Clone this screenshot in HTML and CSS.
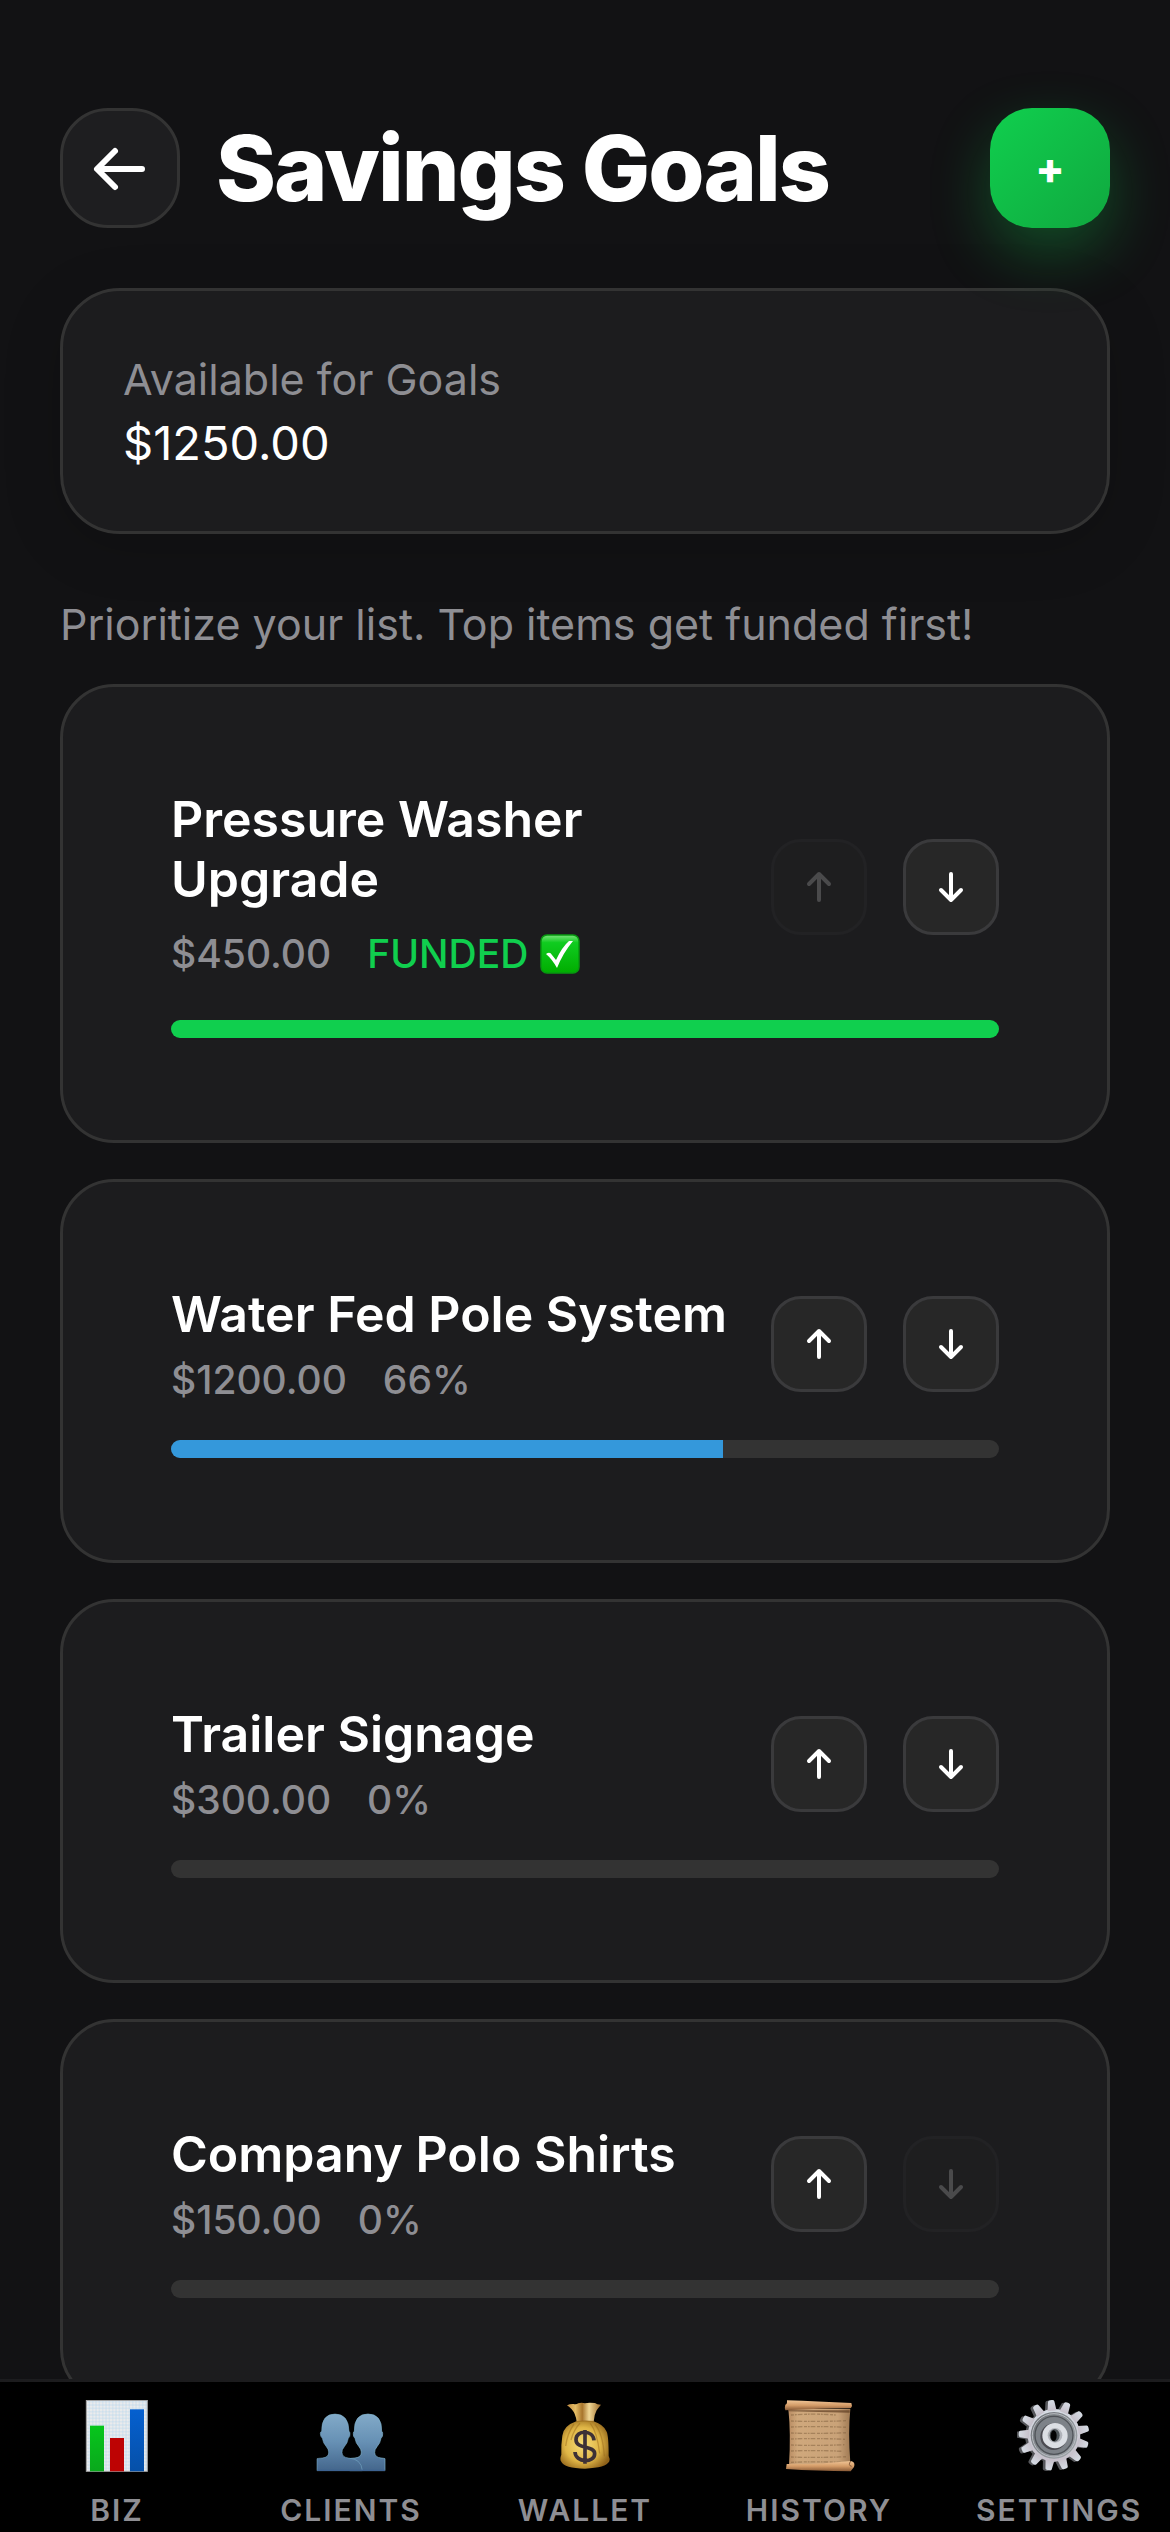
FILE: index.html
```html
<!DOCTYPE html>
<html lang="en">
<head>
<meta charset="utf-8">
<meta name="viewport" content="width=device-width, initial-scale=1">
<title>Savings Goals</title>
<link rel="stylesheet" href="styles.css">
</head>
<body>
<svg class="sprite" aria-hidden="true">
  <symbol id="arrow-up" viewBox="0 0 32 36"><path d="M16 31V5M6 15 16 5l10 10"/></symbol>
  <symbol id="arrow-down" viewBox="0 0 32 36"><path d="M16 5v26M6 21l10 10 10-10"/></symbol>
</svg>
<div class="app">
  <main class="screen">
    <header class="header">
      <button class="back" type="button" aria-label="Back">
        <svg class="back-icon" viewBox="0 0 60 60" aria-hidden="true"><path d="M52 31H8M25 13 7 31l18 18"/></svg>
      </button>
      <h1 class="title">Savings Goals</h1>
      <button class="add" type="button" aria-label="Add goal">+</button>
    </header>

    <section class="summary">
      <p class="summary-label">Available for Goals</p>
      <p class="summary-value">$1250.00</p>
    </section>

    <p class="hint">Prioritize your list. Top items get funded first!</p>

    <ul class="goals">
      <li class="goal">
        <div class="goal-row">
          <div class="goal-text">
            <h2 class="goal-name">Pressure Washer Upgrade</h2>
            <div class="goal-meta goal-meta-funded">
              <span>$450.00</span>
              <span class="funded">FUNDED
                <svg class="check" viewBox="0 0 40 40" role="img" aria-label="Done">
                  <defs><linearGradient id="ck" x2="0" y2="1"><stop offset="0" stop-color="#7be27b"/><stop offset=".2" stop-color="#10cc20"/><stop offset="1" stop-color="#00ad00"/></linearGradient></defs>
                  <rect x="1" y="1" width="38" height="38" rx="6" fill="url(#ck)" stroke="#079910" stroke-width="1.5"/>
                  <path d="M6 20q4-3 6 1l4 5Q22 13 29 7h4Q23 19 17 34 12 25 6 20z" fill="#fff"/>
                </svg>
              </span>
            </div>
          </div>
          <div class="moves">
            <button class="move" type="button" aria-label="Move up" disabled><svg class="move-icon"><use href="#arrow-up"/></svg></button>
            <button class="move" type="button" aria-label="Move down"><svg class="move-icon"><use href="#arrow-down"/></svg></button>
          </div>
        </div>
        <div class="track"><div class="fill fill-done" style="width:100%"></div></div>
      </li>
      <li class="goal">
        <div class="goal-row">
          <div class="goal-text">
            <h2 class="goal-name">Water Fed Pole System</h2>
            <div class="goal-meta"><span>$1200.00</span><span>66%</span></div>
          </div>
          <div class="moves">
            <button class="move" type="button" aria-label="Move up"><svg class="move-icon"><use href="#arrow-up"/></svg></button>
            <button class="move" type="button" aria-label="Move down"><svg class="move-icon"><use href="#arrow-down"/></svg></button>
          </div>
        </div>
        <div class="track"><div class="fill" style="width:66.67%"></div></div>
      </li>
      <li class="goal">
        <div class="goal-row">
          <div class="goal-text">
            <h2 class="goal-name">Trailer Signage</h2>
            <div class="goal-meta"><span>$300.00</span><span>0%</span></div>
          </div>
          <div class="moves">
            <button class="move" type="button" aria-label="Move up"><svg class="move-icon"><use href="#arrow-up"/></svg></button>
            <button class="move" type="button" aria-label="Move down"><svg class="move-icon"><use href="#arrow-down"/></svg></button>
          </div>
        </div>
        <div class="track"><div class="fill" style="width:0%"></div></div>
      </li>
      <li class="goal">
        <div class="goal-row">
          <div class="goal-text">
            <h2 class="goal-name">Company Polo Shirts</h2>
            <div class="goal-meta"><span>$150.00</span><span>0%</span></div>
          </div>
          <div class="moves">
            <button class="move" type="button" aria-label="Move up"><svg class="move-icon"><use href="#arrow-up"/></svg></button>
            <button class="move" type="button" aria-label="Move down" disabled><svg class="move-icon"><use href="#arrow-down"/></svg></button>
          </div>
        </div>
        <div class="track"><div class="fill" style="width:0%"></div></div>
      </li>
    </ul>
  </main>

  <nav class="tabs" aria-label="Main">
    <a class="tab" href="#biz">
      <svg class="tab-icon" viewBox="0 0 216 216" aria-hidden="true">
        <defs>
          <pattern id="grid" width="10" height="10" patternUnits="userSpaceOnUse"><rect width="10" height="10" fill="#ececec"/><path d="M0 5h10M5 0v10" stroke="#bcd8ec" stroke-width="2"/></pattern>
          <linearGradient id="bg" x2="0" y2="1"><stop stop-color="#06c61c"/><stop offset="1" stop-color="#0aa81c"/></linearGradient>
          <linearGradient id="bb" x2="0" y2="1"><stop stop-color="#0560d0"/><stop offset="1" stop-color="#0650a8"/></linearGradient>
        </defs>
        <rect x="16" y="1" width="183" height="213" fill="url(#grid)" stroke="#a5a5a5" stroke-width="3"/>
        <rect x="27" y="77" width="42" height="137" fill="url(#bg)"/>
        <rect x="87" y="114" width="42" height="100" fill="#bd0303"/>
        <rect x="147" y="28" width="42" height="186" fill="url(#bb)"/>
      </svg>
      <span class="tab-label">BIZ</span>
    </a>
    <a class="tab" href="#clients">
      <svg class="tab-icon" viewBox="0 0 216 216" aria-hidden="true">
        <defs><linearGradient id="pp" gradientUnits="userSpaceOnUse" x1="0" y1="42" x2="0" y2="212"><stop stop-color="#82aac8"/><stop offset=".5" stop-color="#6690b4"/><stop offset="1" stop-color="#44668c"/></linearGradient></defs>
        <g fill="url(#pp)" stroke="#7fb2cc" stroke-width="2">
          <path d="M104 212v-36q2-1 16-2 20-2 19-18 0-8-7-16-10-11-12-25-6-5-5-14 0-6 3-7-1-52 41-52t41 52q3 1 3 7 1 9-5 14-2 14-12 25-8 9-7 18 1 14 19 16 10 1 12 2v36z"/>
          <path d="M6 212v-36q2-1 16-2 20-2 19-18 0-8-7-16-10-11-12-25-6-5-6-14 0-6 4-7-1-52 40-52t42 52q3 1 3 7 1 9-5 14-2 14-12 25-8 9-7 18 1 14 19 16 39 2 42 38z" stroke-width="1.5"/>
        </g>
        <path d="M7 211h203" stroke="#3d6290" stroke-width="4"/>
      </svg>
      <span class="tab-label">CLIENTS</span>
    </a>
    <a class="tab" href="#wallet">
      <svg class="tab-icon" viewBox="0 0 216 216" aria-hidden="true">
        <defs>
          <radialGradient id="bag" cx=".45" cy=".5" r=".6"><stop stop-color="#f7dd78"/><stop offset=".6" stop-color="#dfb545"/><stop offset="1" stop-color="#8e6119"/></radialGradient>
          <linearGradient id="neck"><stop stop-color="#c08c42"/><stop offset=".25" stop-color="#e4bd66"/><stop offset=".45" stop-color="#a8752c"/><stop offset=".65" stop-color="#f0d795"/><stop offset="1" stop-color="#9c6a28"/></linearGradient>
        </defs>
        <path d="M54 16q10-5 20-4 8 2 14-2 10-3 20 0 8-3 30-1 5 5 18 5-7 8-13 17-8 14-9 34H83q-3-24-15-37-7-7-14-12z" fill="url(#neck)"/>
        <path d="M82 64q26-4 52 0 30 10 39 31 6 13 6 73 5 10 2 16-10 20-73 22-62 0-72-22-4-7 1-20-1-32 3-57 4-30 42-43z" fill="url(#bag)"/>
        <path d="M82 65q26-4 52 0M75 72Q55 100 50 138M93 70q-18 18-27 50M124 70q20 25 28 90M138 73q24 28 28 96" fill="none" stroke="#966619" stroke-opacity=".45" stroke-width="4"/>
        <path d="M135 121c-2-32-54-32-54-2 0 30 56 16 56 42 0 29-58 28-59-5M108 90v101" fill="none" stroke="#3d3136" stroke-width="11"/>
      </svg>
      <span class="tab-label">WALLET</span>
    </a>
    <a class="tab" href="#history">
      <svg class="tab-icon" viewBox="0 0 216 216" aria-hidden="true">
        <defs>
          <linearGradient id="pa"><stop stop-color="#b98c62"/><stop offset=".15" stop-color="#cfa87c"/><stop offset=".8" stop-color="#c9a278"/><stop offset="1" stop-color="#a07a54"/></linearGradient>
          <linearGradient id="ro" x2="0" y2="1"><stop stop-color="#f0c596"/><stop offset=".5" stop-color="#d49c68"/><stop offset="1" stop-color="#855734"/></linearGradient>
        </defs>
        <path d="M16 26h186q-7 70 0 162l-184 8Q24 100 16 26z" fill="url(#pa)"/>
        <path d="M18 31h182v7L18 34z" fill="#5f3d22" opacity=".7"/>
        <path d="M24 45q70-5 135 0M24 63q80 3 165-1M24 81q85-3 168 1M24 99q80 3 168-1M24 117q80-3 162 1M24 135q80 3 160-1M24 153q80-3 155 1M24 171q80 3 168-1M24 187q70-3 150 0" fill="none" stroke="#80603e" stroke-opacity=".5" stroke-width="4" stroke-dasharray="9 3 5 3 14 5"/>
        <path d="M12 1q90 3 193 8 4 8-1 15Q110 25 7 31q-3-7 0-17 6 0 5-13z" fill="url(#ro)"/>
        <path d="M11 192q92 2 192-9 15 2 10 18l-10 13Q100 213 9 207z" fill="url(#ro)"/>
        <path d="M203 183q-9 14 3 16" fill="none" stroke="#845a38" stroke-width="3"/>
      </svg>
      <span class="tab-label">HISTORY</span>
    </a>
    <a class="tab" href="#settings">
      <svg class="tab-icon" viewBox="0 0 216 216" aria-hidden="true">
        <defs>
          <linearGradient id="ge" x2="0" y2="1"><stop stop-color="#d6dce4"/><stop offset="1" stop-color="#c6c0ca"/></linearGradient>
          <linearGradient id="ri" x2="1" y2="1"><stop stop-color="#6c7075"/><stop offset="1" stop-color="#a4a9ae"/></linearGradient>
          <g id="cog">
            <circle cx="111" cy="106" r="79"/>
            <g id="t4"><path id="t1" d="M98 32l4-28q1-4 7-4h5q6 0 7 4l4 28z"/><use href="#t1" transform="rotate(27.7 111 106)"/><use href="#t1" transform="rotate(55.4 111 106)"/><use href="#t1" transform="rotate(83.1 111 106)"/></g>
            <use href="#t4" transform="rotate(110.8 111 106)"/><use href="#t4" transform="rotate(221.5 111 106)"/><use href="#t1" transform="rotate(332.3 111 106)"/>
          </g>
        </defs>
        <g transform="rotate(-5 111 106)">
          <use href="#cog" fill="#55565a" transform="translate(-8 1)"/>
          <use href="#cog" fill="url(#ge)"/>
        </g>
        <circle cx="111" cy="106" r="70" fill="url(#ri)"/>
        <circle cx="111" cy="106" r="65" fill="none" stroke="#b8bdc2" stroke-width="3"/>
        <circle cx="111" cy="106" r="57" fill="#7d8288" stroke="#4f5358" stroke-width="4"/>
        <circle cx="110" cy="110" r="40" fill="#4b4b51"/>
        <circle cx="114" cy="107" r="38" fill="#dcdfe4"/>
        <circle cx="114" cy="106" r="22" fill="#b1b4ba"/>
        <ellipse cx="113" cy="106" rx="15" ry="19" fill="#4e5559"/>
        <ellipse cx="110" cy="107" rx="9" ry="16" fill="#030303"/>
      </svg>
      <span class="tab-label">SETTINGS</span>
    </a>
  </nav>
</div>
</body>
</html>
```
FILE: styles.css
```css
:root {
  --bg: #121214;
  --card: #1c1c1e;
  --line: #333333;
  --muted: #8e8e93;
  --green: #10cf4e;
  --blue: #3498db;
}

* {
  box-sizing: border-box;
  margin: 0;
  padding: 0;
}

body {
  background: var(--bg);
  color: #ffffff;
  font-family: Inter, "Liberation Sans", sans-serif;
}

button {
  border: 0;
  color: inherit;
  font: inherit;
}

.sprite {
  display: none;
}

.app {
  display: flex;
  flex-direction: column;
  height: 100vh;
}

.screen {
  flex: 1;
  min-height: 0;
  overflow-y: auto;
  scrollbar-width: none;
  padding: 108px 60px 60px;
}

.header {
  display: flex;
  align-items: center;
  gap: 36px;
  margin-bottom: 60px;
}

.back,
.add {
  display: grid;
  place-items: center;
  flex: none;
  width: 120px;
  height: 120px;
}

.back {
  background: #1e1e20;
  border: 3px solid var(--line);
  border-radius: 48px;
}

.back-icon {
  width: 60px;
  height: 60px;
  fill: none;
  stroke: #ffffff;
  stroke-width: 6;
  stroke-linecap: round;
  stroke-linejoin: round;
}

.title {
  flex: 1;
  font-size: 91px;
  font-weight: 800;
  line-height: 120px;
  letter-spacing: -2px;
}

.add {
  position: relative;
  z-index: 1;
  border-radius: 42px;
  background: linear-gradient(135deg, var(--green), #10a83f);
  box-shadow: 0 24px 60px rgba(16, 207, 78, 0.3);
  font-size: 43px;
  font-weight: 800;
}

.summary {
  display: flex;
  flex-direction: column;
  gap: 4px;
  padding: 58px 60px;
  background: var(--card);
  border: 3px solid var(--line);
  border-radius: 60px;
  box-shadow: 0 12px 60px rgba(0, 0, 0, 0.15);
}

.summary-label,
.hint {
  color: var(--muted);
  font-size: 43px;
  line-height: 60px;
}

.summary-value {
  font-size: 47px;
  line-height: 60px;
}

.hint {
  margin: 60px 0 30px;
}

.goals {
  display: flex;
  flex-direction: column;
  gap: 36px;
  list-style: none;
}

.goal {
  display: flex;
  flex-direction: column;
  gap: 36px;
  padding: 102px 108px;
  background: var(--card);
  border: 3px solid var(--line);
  border-radius: 54px;
}

.goal-row {
  display: flex;
  align-items: center;
  gap: 36px;
}

.goal-text {
  display: flex;
  flex: 1;
  flex-direction: column;
  gap: 12px;
  min-width: 0;
}

.goal-name {
  font-size: 50px;
  font-weight: 600;
  line-height: 60px;
}

.goal-meta {
  display: flex;
  gap: 36px;
  color: var(--muted);
  font-size: 39px;
  font-weight: 500;
  line-height: 48px;
}

.goal-meta-funded {
  padding: 9px 0 6px;
}

.funded {
  display: flex;
  align-items: center;
  gap: 12px;
  color: var(--green);
}

.check {
  width: 40px;
  height: 40px;
}

.moves {
  display: flex;
  flex: none;
  gap: 36px;
}

.move {
  display: grid;
  place-items: center;
  width: 96px;
  height: 96px;
  background: #272727;
  border: 3px solid #3a3a3c;
  border-radius: 30px;
}

.move:disabled {
  opacity: 0.2;
}

.move-icon {
  width: 32px;
  height: 36px;
  fill: none;
  stroke: #ffffff;
  stroke-width: 4;
  stroke-linecap: round;
  stroke-linejoin: round;
}

.track {
  height: 18px;
  overflow: hidden;
  background: var(--line);
  border-radius: 9px;
}

.fill {
  height: 100%;
  background: var(--blue);
}

.fill-done {
  background: var(--green);
}

.tabs {
  display: grid;
  grid-template-columns: repeat(5, 1fr);
  flex: none;
  padding: 18px 0 4px;
  background: #000000;
  border-top: 3px solid #1c1c1e;
}

.tab {
  display: flex;
  flex-direction: column;
  align-items: center;
  gap: 20px;
  min-width: 0;
  padding: 0 40px;
  color: var(--muted);
  font-size: 30px;
  font-weight: 600;
  line-height: 36px;
  letter-spacing: 2px;
  text-decoration: none;
}

.tab-label {
  width: 100%;
  text-align: center;
  white-space: nowrap;
}

.tab-icon {
  width: 72px;
  height: 72px;
}
```
